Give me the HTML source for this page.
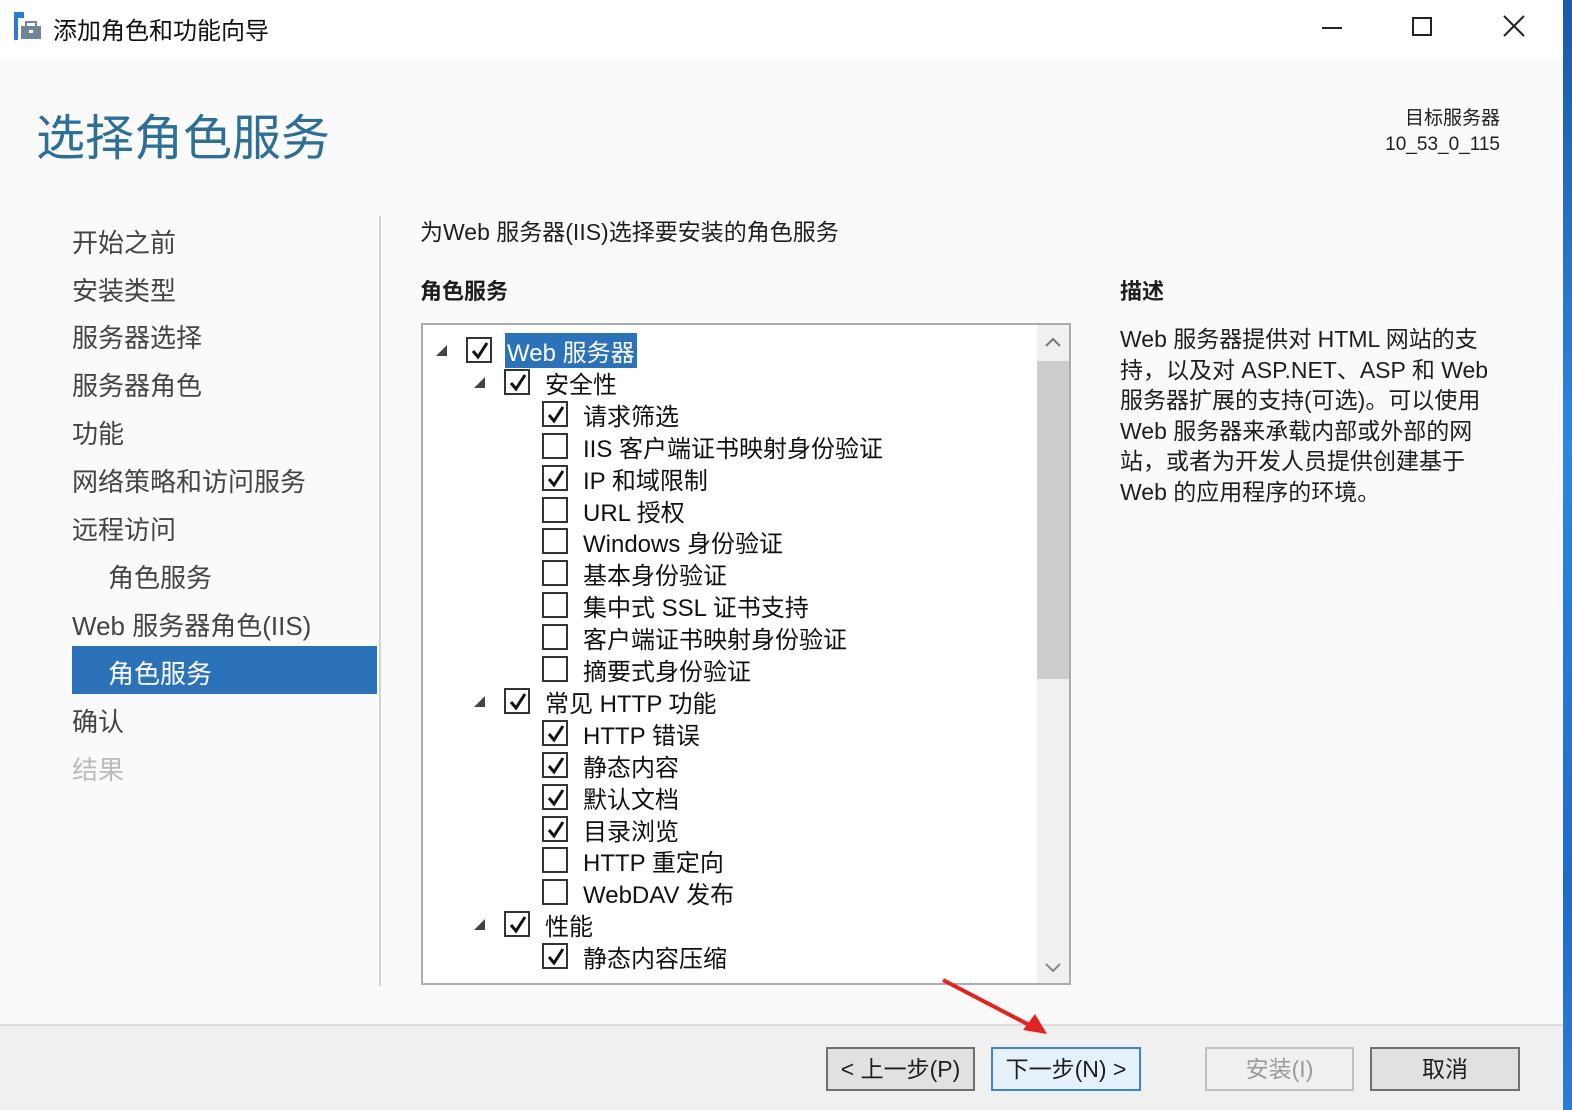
<!DOCTYPE html>
<html><head><meta charset="utf-8"><style>
*{margin:0;padding:0;box-sizing:border-box}
body{width:1572px;height:1110px;overflow:hidden;background:#fafafa;font-family:"Liberation Sans","Noto Sans CJK SC",sans-serif;position:relative;color:#1e1e1e}
.a{position:absolute;white-space:nowrap}
.title{top:0;left:0;width:1563px;height:58px;background:#fff}
.nav{font-size:26px;color:#444;left:72px}
.cb{position:absolute;width:26px;height:26px;border:2px solid #333;background:#fff}
.cb svg{position:absolute;left:2px;top:2px}
.tr{position:absolute;font-size:24px;color:#111}
.tri{position:absolute;width:0;height:0;border-left:11px solid transparent;border-bottom:11px solid #444}
.btn{position:absolute;top:1047px;height:44px;background:#e1e1e1;border:2px solid #707070;font-size:23px;text-align:center;line-height:40px}
</style></head><body>
<div class="a title"></div>
<svg class="a" style="left:14px;top:12px" width="28" height="30"><rect x="0" y="0" width="10" height="6" fill="#2b7bd0"/><rect x="0" y="0" width="4" height="28" fill="#2b7bd0"/><rect x="7" y="14" width="20" height="13" fill="#6d8597"/><rect x="12" y="10" width="10" height="5" fill="none" stroke="#6d8597" stroke-width="2"/><rect x="15" y="18" width="4" height="3" fill="#fff"/></svg>
<div class="a" style="left:53px;top:11px;font-size:24px;color:#111">添加角色和功能向导</div>
<div class="a" style="left:1322px;top:27px;width:20px;height:2px;background:#222"></div>
<div class="a" style="left:1412px;top:17px;width:20px;height:19px;border:2px solid #222"></div>
<svg class="a" style="left:1503px;top:15px" width="22" height="22"><path d="M1 1L21 21M21 1L1 21" stroke="#222" stroke-width="2"/></svg>
<div class="a" style="left:1563px;top:0;width:9px;height:1110px;background:linear-gradient(#1a5aa8,#2f86de 40%,#1c6cc8 80%,#2b7cd6)"></div>
<div class="a" style="left:36px;top:99px;font-size:49px;color:#2d6f95">选择角色服务</div>
<div class="a" style="left:1370px;top:106px;font-size:19px;text-align:right;width:130px;line-height:26px">目标服务器<br>10_53_0_115</div>
<div class="a" style="left:379px;top:216px;width:2px;height:770px;background:#d2d2d2"></div>
<div class="a" style="left:72px;top:646px;width:305px;height:48px;background:#2c72b8"></div>
<div class="a nav" style="top:223px">开始之前</div>
<div class="a nav" style="top:271px">安装类型</div>
<div class="a nav" style="top:318px">服务器选择</div>
<div class="a nav" style="top:366px">服务器角色</div>
<div class="a nav" style="top:414px">功能</div>
<div class="a nav" style="top:462px">网络策略和访问服务</div>
<div class="a nav" style="top:510px">远程访问</div>
<div class="a nav" style="top:558px;left:108px">角色服务</div>
<div class="a nav" style="top:606px">Web 服务器角色(IIS)</div>
<div class="a nav" style="top:654px;left:108px;color:#fff">角色服务</div>
<div class="a nav" style="top:702px">确认</div>
<div class="a nav" style="top:750px;color:#bbb">结果</div>
<div class="a" style="left:420px;top:213px;font-size:23px">为Web 服务器(IIS)选择要安装的角色服务</div>
<div class="a" style="left:420px;top:274px;font-size:22px;font-weight:bold">角色服务</div>
<div class="a" style="left:1120px;top:274px;font-size:22px;font-weight:bold">描述</div>
<div class="a" style="left:1120px;top:324px;font-size:23px;line-height:30.5px">Web 服务器提供对 HTML 网站的支<br>持，以及对 ASP.NET、ASP 和 Web<br>服务器扩展的支持(可选)。可以使用<br>Web 服务器来承载内部或外部的网<br>站，或者为开发人员提供创建基于<br>Web 的应用程序的环境。</div>
<div class="a" style="left:421px;top:323px;width:650px;height:662px;background:#fff;border:2px solid #acacac;overflow:hidden">
<div style="position:absolute;left:614px;top:0;width:34px;height:660px;background:#f0f0f0"></div>
<div style="position:absolute;left:614px;top:36px;width:34px;height:318px;background:#cdcdcd"></div>
<svg style="position:absolute;left:622px;top:12px" width="16" height="10"><path d="M1 9L8 2L15 9" stroke="#777" stroke-width="2" fill="none"/></svg>
<svg style="position:absolute;left:622px;top:638px" width="16" height="10"><path d="M1 1L8 8L15 1" stroke="#888" stroke-width="2" fill="none"/></svg>
</div>
<div id="tree"></div>
<script>
var rows=[[0,1,"Web 服务器"],[1,1,"安全性"],[2,1,"请求筛选"],[2,0,"IIS 客户端证书映射身份验证"],[2,1,"IP 和域限制"],[2,0,"URL 授权"],[2,0,"Windows 身份验证"],[2,0,"基本身份验证"],[2,0,"集中式 SSL 证书支持"],[2,0,"客户端证书映射身份验证"],[2,0,"摘要式身份验证"],[1,1,"常见 HTTP 功能"],[2,1,"HTTP 错误"],[2,1,"静态内容"],[2,1,"默认文档"],[2,1,"目录浏览"],[2,0,"HTTP 重定向"],[2,0,"WebDAV 发布"],[1,1,"性能"],[2,1,"静态内容压缩"]];
var h="";
rows.forEach(function(r,i){var y=337+i*31.9;var x=466+r[0]*38;
if(r[0]<2)h+='<div class="tri" style="left:'+(x-30)+'px;top:'+(y+8)+'px"></div>';
h+='<div class="cb" style="left:'+x+'px;top:'+y+'px">'+(r[1]?'<svg width="20" height="20"><path d="M3 10L8 16L17 2" stroke="#111" stroke-width="3" fill="none"/></svg>':'')+'</div>';
var st=i==0?'background:#2c72b8;color:#fff;padding:0 2px;':'';
h+='<div class="tr" style="left:'+(x+41-(i==0?2:0))+'px;top:'+(y-4)+'px;'+st+'">'+r[2]+'</div>';});
document.getElementById('tree').innerHTML=h;
</script>
<div class="a" style="left:0;top:1024px;width:1563px;height:86px;background:#f0f0f0;border-top:2px solid #dcdcdc"></div>
<div class="btn" style="left:826px;width:149px">&lt; 上一步(P)</div>
<div class="btn" style="left:991px;width:150px;border-color:#3c84d6;background:#e5f1fb">下一步(N) &gt;</div>
<div class="btn" style="left:1205px;width:149px;border-color:#bfbfbf;background:#f0f0f0;color:#9a9a9a">安装(I)</div>
<div class="btn" style="left:1370px;width:150px">取消</div>
<svg class="a" style="left:935px;top:972px" width="120" height="64"><path d="M8 8L100 56" stroke="#e52222" stroke-width="4"/><path d="M112 62L88 58L100 42Z" fill="#e52222"/></svg>
</body></html>
